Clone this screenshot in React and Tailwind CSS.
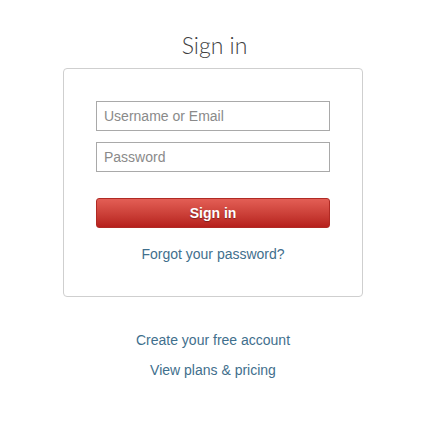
import React from "react";

const App = () => {
  return (
    <div className="min-h-[422px] bg-white pt-[30px] font-['Liberation_Sans',Arial,sans-serif]">
      <h1 className="text-center font-['Lato',sans-serif] text-[23px] leading-[30px] font-light text-[#3f3f3f]">
        Sign in
      </h1>

      {/* Sign in card */}
      <div className="ml-[63px] mt-[8px] w-[300px] rounded-[4px] border border-[#cfcfcf] px-[32px] pt-[32px] pb-[33px]">
        <input
          type="text"
          placeholder="Username or Email"
          className="block h-[30px] w-full border border-[#a9a9a9] px-[7px] text-[14px] text-[#333] placeholder:text-[#8a8a8a] outline-none"
        />
        <input
          type="password"
          placeholder="Password"
          className="mt-[11px] block h-[30px] w-full border border-[#a9a9a9] px-[7px] text-[14px] text-[#333] placeholder:text-[#8a8a8a] outline-none"
        />
        <button className="mt-[26px] block h-[30px] w-full rounded-[3px] border border-[#b02a24] bg-gradient-to-b from-[#e35e55] to-[#b61f1c] text-[14px] font-bold text-white [text-shadow:0_1px_1px_rgba(0,0,0,0.35)]">
          Sign in
        </button>
        <a href="#" className="mt-[18px] block text-center text-[14px] leading-[17px] text-[#3f6f8d]">
          Forgot your password?
        </a>
      </div>

      <div className="ml-[63px] mt-[35px] flex w-[300px] flex-col items-center gap-[13px]">
        <a href="#" className="text-[14px] leading-[17px] text-[#3f6f8d]">
          Create your free account
        </a>
        <a href="#" className="text-[14px] leading-[17px] text-[#3f6f8d]">
          View plans &amp; pricing
        </a>
      </div>
    </div>
  );
};

export default App;
